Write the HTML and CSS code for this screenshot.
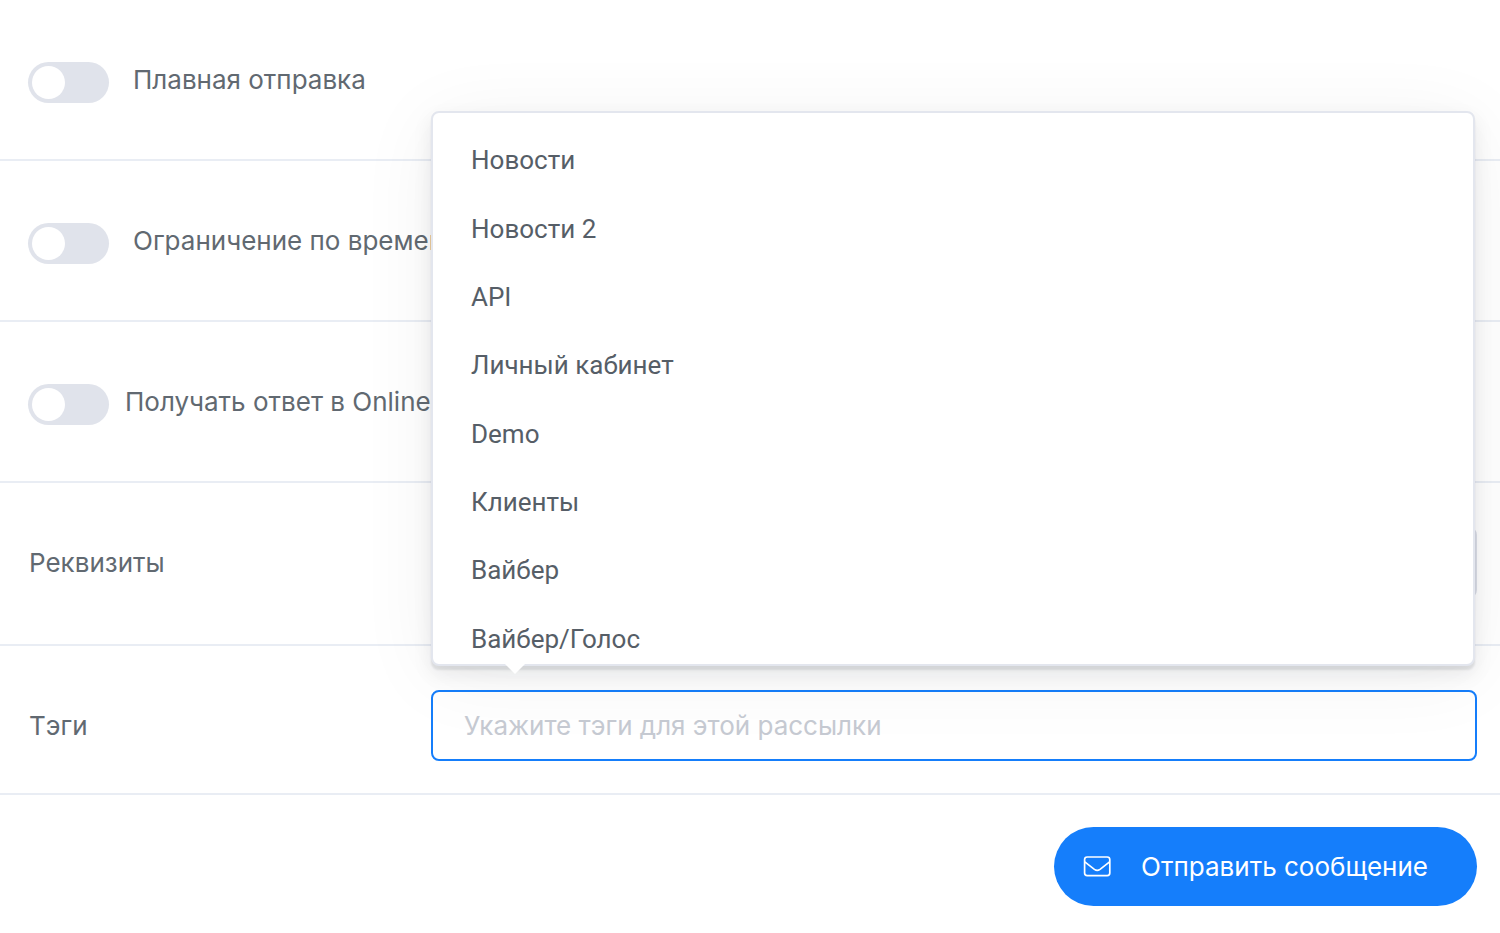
FILE: index.html
```html
<!DOCTYPE html>
<html lang="ru">
<head>
<meta charset="utf-8">
<meta name="viewport" content="width=device-width, initial-scale=1">
<title>Рассылка</title>
<link rel="stylesheet" href="styles.css">
</head>
<body>
<form class="form">
  <div class="row row--switch">
    <input class="switch" type="checkbox" role="switch" id="smooth">
    <label class="label" for="smooth">Плавная отправка</label>
  </div>
  <div class="row row--switch">
    <input class="switch" type="checkbox" role="switch" id="limit">
    <label class="label" for="limit">Ограничение по времени</label>
  </div>
  <div class="row row--switch row--tight">
    <input class="switch" type="checkbox" role="switch" id="reply">
    <label class="label" for="reply">Получать ответ в Online-чат</label>
  </div>
  <div class="row row--field row--details">
    <label class="label" for="details">Реквизиты</label>
    <div class="field">
      <select class="control" id="details"><option></option></select>
    </div>
  </div>
  <div class="row row--field">
    <label class="label" for="tags">Тэги</label>
    <div class="field">
      <input class="control control--active" type="text" id="tags" placeholder="Укажите тэги для этой рассылки" autocomplete="off">
      <div class="popup">
        <div class="popup__scroll">
          <ul class="popup__list">
            <li class="popup__item"><button class="option" type="button">Новости</button></li>
            <li class="popup__item"><button class="option" type="button">Новости 2</button></li>
            <li class="popup__item"><button class="option" type="button">API</button></li>
            <li class="popup__item"><button class="option" type="button">Личный кабинет</button></li>
            <li class="popup__item"><button class="option" type="button">Demo</button></li>
            <li class="popup__item"><button class="option" type="button">Клиенты</button></li>
            <li class="popup__item"><button class="option" type="button">Вайбер</button></li>
            <li class="popup__item"><button class="option" type="button">Вайбер/Голос</button></li>
          </ul>
        </div>
      </div>
    </div>
  </div>
  <div class="actions">
    <button class="submit" type="submit">
      <svg class="submit__icon" width="28" height="22" viewBox="0 0 28 22" fill="none" stroke="currentColor" stroke-width="1.7" stroke-linejoin="round" aria-hidden="true">
        <rect x="1.6" y="1" width="25.2" height="18.6" rx="2.6"/>
        <path d="M1.8 5.8L11.4 13.4Q14.2 15.4 17 13.4L26.6 5.8"/>
      </svg>
      <span>Отправить сообщение</span>
    </button>
  </div>
</form>
</body>
</html>
```
FILE: styles.css
```css
* {
  box-sizing: border-box;
}

body {
  margin: 0;
  background: #fff;
  color: #616971;
  font: 26px/36px Inter, "Noto Sans", sans-serif;
  overflow-x: hidden;
}

button,
input,
select {
  margin: 0;
  font: inherit;
  color: inherit;
}

.row {
  padding: 0 23px 0 28px;
  border-bottom: 2px solid #e9edf4;
}

.row--switch {
  display: flex;
  align-items: flex-start;
  gap: 24px;
  padding-top: 62px;
  padding-bottom: 56px;
}

.row--tight {
  gap: 16px;
}

.row--field {
  display: grid;
  grid-template-columns: 402px 1fr;
  align-items: center;
  padding-top: 44px;
  padding-left: 29px;
  padding-bottom: 32px;
}

.row--details {
  padding-bottom: 46px;
}

.label {
  white-space: nowrap;
}

.switch {
  appearance: none;
  flex: none;
  display: flex;
  align-items: center;
  width: 81px;
  height: 41px;
  padding: 0 4px;
  border-radius: 21px;
  background: #e0e3eb;
}

.switch::before {
  content: "";
  width: 33px;
  height: 33px;
  border-radius: 50%;
  background: #fff;
}

.switch:checked {
  justify-content: flex-end;
  background: #157efb;
}

.field {
  position: relative;
}

.control {
  display: block;
  width: 100%;
  height: 71px;
  padding: 0 31px;
  border: 2px solid #dde0e9;
  border-radius: 8px;
  background: transparent;
  appearance: none;
  outline: none;
}

.control--active {
  border-color: #157efb;
}

.control::placeholder {
  color: #c6cad2;
  opacity: 1;
}

.popup {
  position: absolute;
  z-index: 1;
  left: 0;
  right: 2px;
  bottom: calc(100% + 24px);
  border: 2px solid #e3e6ee;
  border-radius: 8px;
  background: #fff;
  box-shadow:
    0 4px 2px rgba(20, 30, 40, 0.1),
    0 8px 20px rgba(20, 30, 40, 0.08),
    0 10px 80px rgba(20, 40, 30, 0.06);
}

.popup::after {
  content: "";
  position: absolute;
  top: 100%;
  left: 72px;
  border: 10px solid transparent;
  border-top-color: #fff;
  border-bottom: 0;
}

.popup__scroll {
  max-height: 551px;
  overflow-y: auto;
  scrollbar-width: none;
}

.popup__list {
  display: flex;
  flex-direction: column;
  height: 560px;
  margin: 0;
  padding: 13px 0 0;
  list-style: none;
}

.popup__item {
  flex: 1;
  display: flex;
}

.option {
  flex: 1;
  padding: 0 38px;
  border: 0;
  background: none;
  color: #565e67;
  font-family: Roboto, sans-serif;
  text-align: left;
}

.actions {
  display: flex;
  justify-content: flex-end;
  padding: 32px 23px 27px;
}

.submit {
  display: flex;
  align-items: center;
  gap: 30px;
  height: 79px;
  padding: 0 49px 0 29px;
  border: 0;
  border-radius: 40px;
  background: #157efb;
  color: #fff;
}
```
